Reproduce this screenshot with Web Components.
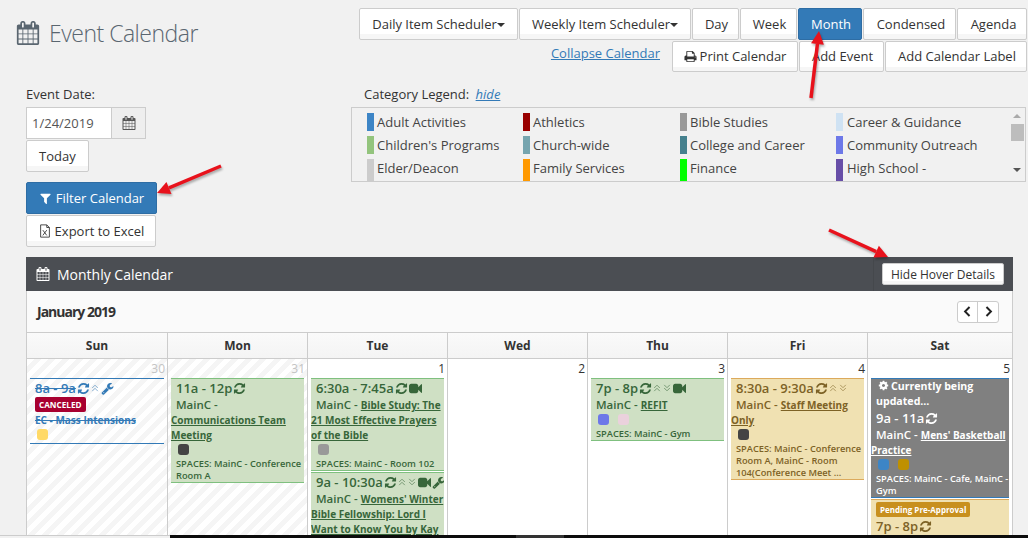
<!DOCTYPE html>
<html>
<head>
<meta charset="utf-8">
<title>Event Calendar</title>
<style>
  html, body { margin: 0; height: 538px; overflow: hidden; background: #f1f1f1; }
  body { font-family: "Open Sans", "Liberation Sans", sans-serif; font-size: 13px; color: #333; }
</style>
</head>
<body>

<ec-page>
  <ec-header>
    <ec-btn slot="row1" caret style="width:159px">Daily Item Scheduler</ec-btn>
    <ec-btn slot="row1" caret style="width:172px">Weekly Item Scheduler</ec-btn>
    <ec-btn slot="row1" style="width:47px;padding:0 0 0 2px">Day</ec-btn>
    <ec-btn slot="row1" style="width:57px;padding:0 0 0 2px">Week</ec-btn>
    <ec-btn slot="row1" primary style="width:64px;padding:0 0 0 2px">Month</ec-btn>
    <ec-btn slot="row1" style="width:93px;padding:0 0 0 3px">Condensed</ec-btn>
    <ec-btn slot="row1" style="width:70px;padding:0 0 0 3px">Agenda</ec-btn>
    <ec-btn slot="row2" style="width:126px;height:31px;padding:0 0 1px"><ec-icon name="print" size="13" style="margin-right:3px"></ec-icon>Print Calendar</ec-btn>
    <ec-btn slot="row2" style="width:85px;height:31px;padding:0 0 1px 2px">Add Event</ec-btn>
    <ec-btn slot="row2" style="width:142px;height:31px;padding:0 0 1px 2px">Add Calendar Label</ec-btn>
  </ec-header>

  <ec-controls>
    <ec-filters></ec-filters>
    <ec-legend>
      <ec-legend-item color="#3d85c6">Adult Activities</ec-legend-item>
      <ec-legend-item color="#990000">Athletics</ec-legend-item>
      <ec-legend-item color="#999999">Bible Studies</ec-legend-item>
      <ec-legend-item color="#cfe2f3">Career &amp; Guidance</ec-legend-item>
      <ec-legend-item color="#93c47d">Children's Programs</ec-legend-item>
      <ec-legend-item color="#76a5af">Church-wide</ec-legend-item>
      <ec-legend-item color="#45818e">College and Career</ec-legend-item>
      <ec-legend-item color="#6d78e8">Community Outreach</ec-legend-item>
      <ec-legend-item color="#cccccc">Elder/Deacon</ec-legend-item>
      <ec-legend-item color="#ff9900">Family Services</ec-legend-item>
      <ec-legend-item color="#00ff00">Finance</ec-legend-item>
      <ec-legend-item color="#674ea7">High School -</ec-legend-item>
    </ec-legend>
  </ec-controls>

  <ec-calendar>
    <cal-day num="30" muted>
      <cal-event kind="canceled" time="8a - 9a" icons="refresh,up,wrench" loc="" swatches="#ffd966">
        <cal-badge slot="before" color="#a80030">CANCELED</cal-badge>
        EC - Mass Intensions
      </cal-event>
    </cal-day>
    <cal-day num="31" muted>
      <cal-event kind="green" time="11a - 12p" icons="refresh" swatches="#444444" spaces="SPACES: MainC - Conference Room A">Communications Team Meeting</cal-event>
    </cal-day>
    <cal-day num="1">
      <cal-event kind="green" time="6:30a - 7:45a" icons="refresh,video" swatches="#999999" spaces="SPACES: MainC - Room 102">Bible Study: The 21 Most Effective Prayers of the Bible</cal-event>
      <cal-event kind="green" time="9a - 10:30a" icons="refresh,up,down,video,wrench">Womens' Winter Bible Fellowship: Lord I Want to Know You by Kay</cal-event>
    </cal-day>
    <cal-day num="2"></cal-day>
    <cal-day num="3">
      <cal-event kind="green" time="7p - 8p" icons="refresh,up,down,video" swatches="#6d78e8,#ead1dc" spaces="SPACES: MainC - Gym">REFIT</cal-event>
    </cal-day>
    <cal-day num="4">
      <cal-event kind="tan" time="8:30a - 9:30a" icons="refresh,up,down" swatches="#444444" spaces="SPACES: MainC - Conference Room A, MainC - Room 104(Conference Meet ...">Staff Meeting Only</cal-event>
    </cal-day>
    <cal-day num="5">
      <cal-event kind="gray" time="9a - 11a" icons="refresh" swatches="#3d85c6,#bf9000" spaces="SPACES: MainC - Cafe, MainC - Gym">
        <cal-note slot="before">Currently being updated...</cal-note>
        Mens' Basketball Practice
      </cal-event>
      <cal-event kind="tan" time="7p - 8p" icons="refresh" loc="">
        <cal-badge slot="before" color="#c8901f" small>Pending Pre-Approval</cal-badge>
      </cal-event>
    </cal-day>
  </ec-calendar>

  <red-arrow x1="221" y1="166" x2="157" y2="193"></red-arrow>
  <red-arrow x1="811" y1="98" x2="819" y2="31"></red-arrow>
  <red-arrow x1="829" y1="230" x2="888" y2="257"></red-arrow>
  <ec-taskbar></ec-taskbar>
</ec-page>

<script>
  // font awesome 4 outlines, viewBox 1792
  const ICONS = {
    calendar: 'M192 1664h288v-288h-288v288zm352 0h320v-288h-320v288zm-352-352h288v-320h-288v320zm352 0h320v-320h-320v320zm-352-384h288v-288h-288v288zm736 736h320v-288h-320v288zm-384-736h320v-288h-320v288zm768 736h288v-288h-288v288zm-384-352h320v-320h-320v320zm-352-864v-288q0-13-9.5-22.5t-22.5-9.5h-64q-13 0-22.5 9.5t-9.5 22.5v288q0 13 9.5 22.5t22.5 9.5h64q13 0 22.5-9.5t9.5-22.5zm736 864h288v-320h-288v320zm-384-384h320v-288h-320v288zm384 0h288v-288h-288v288zm32-480v-288q0-13-9.5-22.5t-22.5-9.5h-64q-13 0-22.5 9.5t-9.5 22.5v288q0 13 9.5 22.5t22.5 9.5h64q13 0 22.5-9.5t9.5-22.5zm384-64v1280q0 52-38 90t-90 38h-1408q-52 0-90-38t-38-90v-1280q0-52 38-90t90-38h128v-96q0-66 47-113t113-47h64q66 0 113 47t47 113v96h384v-96q0-66 47-113t113-47h64q66 0 113 47t47 113v96h128q52 0 90 38t38 90z',
    refresh: 'M1639 1056q0 5-1 7-64 268-268 434.5t-478 166.5q-146 0-282.5-55t-243.5-157l-129 129q-19 19-45 19t-45-19-19-45v-448q0-26 19-45t45-19h448q26 0 45 19t19 45-19 45l-137 137q71 66 161 102t187 36q134 0 250-65t186-179q11-17 53-117 8-23 30-23h192q13 0 22.5 9.5t9.5 22.5zm25-800v448q0 26-19 45t-45 19h-448q-26 0-45-19t-19-45 19-45l138-138q-148-137-349-137-134 0-250 65t-186 179q-11 17-53 117-8 23-30 23h-199q-13 0-22.5-9.5t-9.5-22.5v-7q65-268 270-434.5t480-166.5q146 0 284 55.5t245 156.5l130-129q19-19 45-19t45 19 19 45z',
    wrench: 'M448 1472q0-26-19-45t-45-19-45 19-19 45 19 45 45 19 45-19 19-45zm644-420l-682 682q-37 37-90 37-52 0-91-37l-106-108q-38-36-38-90 0-53 38-91l681-681q39 98 114.5 173.5t173.5 114.5zm634-435q0 39-23 106-47 134-164.5 217.5t-258.5 83.5q-185 0-316.5-131.5t-131.5-316.5 131.5-316.5 316.5-131.5q58 0 121.5 16.5t107.5 46.5q16 11 16 28t-16 28l-293 169v224l193 107q5-3 79-48.5t135.5-81 70.5-35.5q15 0 23.5 10t8.5 25z',
    video: 'M1792 352v1088q0 42-39 59-13 5-25 5-27 0-45-19l-403-403v166q0 119-84.5 203.5t-203.5 84.5h-704q-119 0-203.5-84.5t-84.5-203.5v-704q0-119 84.5-203.5t203.5-84.5h704q119 0 203.5 84.5t84.5 203.5v165l403-402q18-19 45-19 12 0 25 5 39 17 39 59z',
    filter: 'M1595 295q17 41-14 70l-493 493v742q0 42-39 59-13 5-25 5-27 0-45-19l-256-256q-19-19-19-45v-486l-493-493q-31-29-14-70 17-39 59-39h1280q42 0 59 39z',
    print: 'M448 1536h896v-256h-896v256zm0-640h896v-384h-160q-40 0-68-28t-28-68v-160h-640v640zm1152 64q0-26-19-45t-45-19-45 19-19 45 19 45 45 19 45-19 19-45zm128 0v416q0 13-9.5 22.5t-22.5 9.5h-224v160q0 40-28 68t-68 28h-960q-40 0-68-28t-28-68v-160h-224q-13 0-22.5-9.5t-9.5-22.5v-416q0-79 56.5-135.5t135.5-56.5h64v-544q0-40 28-68t68-28h672q40 0 88 20t76 48l152 152q28 28 48 76t20 88v256h64q79 0 135.5 56.5t56.5 135.5z',
    cog: 'M1152 896q0-106-75-181t-181-75-181 75-75 181 75 181 181 75 181-75 75-181zm512-109v222q0 12-8 23t-20 13l-185 28q-19 54-39 91 35 50 107 138 10 12 10 25t-9 23q-27 37-99 108t-94 71q-12 0-26-9l-138-108q-44 23-91 38-16 136-29 186-7 28-36 28h-222q-14 0-24.5-8.5t-11.5-21.5l-28-184q-49-16-90-37l-141 107q-10 9-25 9-14 0-25-11-126-114-165-168-7-10-7-23 0-12 8-23 15-21 51-66.5t54-70.5q-27-50-41-99l-183-27q-13-2-21-12.5t-8-23.5v-222q0-12 8-23t19-13l186-28q14-46 39-92-40-57-107-138-10-12-10-24 0-10 9-23 26-36 98.5-107.5t94.5-71.5q13 0 26 10l138 107q44-23 91-38 16-136 29-186 7-28 36-28h222q14 0 24.5 8.5t11.5 21.5l28 184q49 16 90 37l142-107q9-9 24-9 13 0 25 10 129 119 165 170 7 8 7 22 0 12-8 23-15 21-51 66.5t-54 70.5q26 50 41 98l183 28q13 2 21 12.5t8 23.5z'
  };

  // line icons that are drawn rather than filled, viewBox 16
  const STROKES = {
    up: 'M3.5 8 8 3.5 12.5 8M3.5 13 8 8.5 12.5 13',
    down: 'M3.5 3 8 7.5 12.5 3M3.5 8 8 12.5 12.5 8',
    left: 'M10.5 2.5 5 8l5.5 5.5',
    right: 'M5.5 2.5 11 8l-5.5 5.5',
    excel: 'M3 1h7l3 3v11H3zM10 1v3h3M5.5 7l4.5 6M10 7l-4.5 6'
  };

  class EcIcon extends HTMLElement {
    connectedCallback() {
      const name = this.getAttribute('name');
      const size = this.getAttribute('size') || 14;
      const root = this.shadowRoot || this.attachShadow({ mode: 'open' });
      let shape;
      if (STROKES[name]) {
        const width = this.getAttribute('stroke') || 1.4;
        shape = `<svg viewBox="0 0 16 16" width="${size}" height="${size}"><path d="${STROKES[name]}" fill="none" stroke="currentColor" stroke-width="${width}"/></svg>`;
      } else {
        shape = `<svg viewBox="0 0 1792 1792" width="${size}" height="${size}"><path d="${ICONS[name]}" fill="currentColor"/></svg>`;
      }
      root.innerHTML = `<style>
        :host { display: inline-block; line-height: 0; vertical-align: -2px; }
      </style>${shape}`;
    }
  }
  customElements.define('ec-icon', EcIcon);

  class EcPage extends HTMLElement {
    constructor() {
      super();
      this.attachShadow({ mode: 'open' });
      this.shadowRoot.innerHTML = `<style>
        :host { display: block; position: relative; width: 1028px; height: 538px; overflow: hidden; }
      </style><slot></slot>`;
    }
  }
  customElements.define('ec-page', EcPage);

  class EcBtn extends HTMLElement {
    constructor() {
      super();
      this.attachShadow({ mode: 'open' });
      this.shadowRoot.innerHTML = `<style>
        :host { display: inline-flex; align-items: center; justify-content: center; box-sizing: border-box; height: 32px; padding: 0 12px; background: linear-gradient(#fff 85%, #f6f6f6 85%); border: 1px solid #ccc; border-radius: 2px; color: #333; font-size: 13px; white-space: nowrap; }
        :host([primary]) { background: #337ab7; border-color: #2e6da4; color: #fff; }
        :host([small]) { height: 22px; font-size: 12px; padding: 0 8px; }
        .caret { display: none; width: 0; height: 0; margin-top: 2px; border: 4px solid transparent; border-top-color: #333; border-bottom: 0; }
        :host([caret]) .caret { display: inline-block; }
      </style><slot></slot><span class="caret"></span>`;
    }
  }
  customElements.define('ec-btn', EcBtn);

  class EcHeader extends HTMLElement {
    constructor() {
      super();
      this.attachShadow({ mode: 'open' });
      this.shadowRoot.innerHTML = `<style>
        :host { display: flex; justify-content: space-between; padding: 8px 1px 0 16px; height: 85px; box-sizing: border-box; }
        .title { display: flex; align-items: center; gap: 9px; height: 50px; color: #5a6670; font-size: 23px; font-weight: 300; letter-spacing: -0.5px; }
        .tools { display: flex; flex-direction: column; gap: 1px; align-items: flex-end; }
        .row { display: flex; gap: 1px; align-items: flex-start; }
        a { color: #337ab7; text-decoration: underline; font-size: 13px; margin-right: 11px; margin-top: 3px; }
      </style>
      <div class="title"><ec-icon name="calendar" size="24"></ec-icon><span>Event Calendar</span></div>
      <div class="tools">
        <div class="row"><slot name="row1"></slot></div>
        <div class="row"><a>Collapse Calendar</a><slot name="row2"></slot></div>
      </div>`;
    }
  }
  customElements.define('ec-header', EcHeader);

  class EcControls extends HTMLElement {
    constructor() {
      super();
      this.attachShadow({ mode: 'open' });
      this.shadowRoot.innerHTML = `<style>
        :host { display: flex; justify-content: space-between; height: 172px; padding: 0 2px 0 26px; box-sizing: border-box; }
      </style><slot></slot>`;
    }
  }
  customElements.define('ec-controls', EcControls);

  class EcFilters extends HTMLElement {
    constructor() {
      super();
      this.attachShadow({ mode: 'open' });
      this.shadowRoot.innerHTML = `<style>
        :host { display: flex; flex-direction: column; align-items: flex-start; font-size: 13px; }
        label { display: block; height: 22px; line-height: 18px; }
        .group { display: flex; height: 32px; }
        .input { box-sizing: border-box; width: 85px; height: 32px; padding-left: 5px; line-height: 30px; background: #fff; border: 1px solid #ccc; border-right: 0; color: #555; }
        .addon { box-sizing: border-box; width: 35px; height: 32px; display: flex; align-items: center; justify-content: center; background: #eee; border: 1px solid #ccc; color: #555; }
        ec-btn { margin-top: 1px; }
        .filter { margin-top: 10px; width: 131px; }
        .export { width: 130px; }
      </style>
      <label>Event Date:</label>
      <div class="group"><div class="input">1/24/2019</div><div class="addon"><ec-icon name="calendar" size="14"></ec-icon></div></div>
      <ec-btn>Today</ec-btn>
      <ec-btn class="filter" primary><ec-icon name="filter" size="13" style="margin-right:4px"></ec-icon>Filter Calendar</ec-btn>
      <ec-btn class="export"><ec-icon name="excel" size="14" stroke="1" style="margin-right:3px"></ec-icon>Export to Excel</ec-btn>`;
    }
  }
  customElements.define('ec-filters', EcFilters);

  class EcLegend extends HTMLElement {
    constructor() {
      super();
      this.attachShadow({ mode: 'open' });
      this.shadowRoot.innerHTML = `<style>
        :host { display: block; width: 675px; font-size: 13px; }
        .label { height: 22px; padding-left: 13px; box-sizing: border-box; line-height: 18px; }
        .label a { color: #337ab7; font-style: italic; text-decoration: underline; margin-left: 3px; }
        .box { display: flex; box-sizing: border-box; height: 75px; border: 1px solid #ccc; overflow: hidden; }
        .grid { flex: 1; display: grid; grid-template-columns: 156px 157px 156px 1fr; grid-auto-rows: 18px; row-gap: 5px; padding: 5px 0 0 15px; }
        .bar { width: 16px; display: flex; flex-direction: column; align-items: center; color: #666; }
        .up, .down { width: 0; height: 0; border: 4px solid transparent; }
        .up { border-bottom-color: #aaa; border-top: 0; margin-top: 6px; }
        .thumb { width: 13px; height: 17px; background: #bdbdbd; margin-top: 6px; }
        .down { border-top-color: #555; border-bottom: 0; margin-top: 27px; }
      </style>
      <div class="label">Category Legend: <a>hide</a></div>
      <div class="box"><div class="grid"><slot></slot></div><div class="bar"><span class="up"></span><span class="thumb"></span><span class="down"></span></div></div>`;
    }
  }
  customElements.define('ec-legend', EcLegend);

  class EcLegendItem extends HTMLElement {
    constructor() {
      super();
      this.attachShadow({ mode: 'open' });
      this.shadowRoot.innerHTML = `<style>
        :host { display: flex; align-items: stretch; gap: 3px; font-size: 13px; line-height: 18px; color: #444; white-space: nowrap; }
        :host(:nth-child(4n)) { gap: 4px; }
        i { width: 7px; height: 18px; display: block; }
        :host(:nth-child(n+9)) i { height: 23px; }
      </style><i></i><slot></slot>`;
    }
    connectedCallback() {
      this.shadowRoot.querySelector('i').style.background = this.getAttribute('color');
    }
  }
  customElements.define('ec-legend-item', EcLegendItem);

  class EcCalendar extends HTMLElement {
    constructor() {
      super();
      this.attachShadow({ mode: 'open' });
      const names = ['Sun', 'Mon', 'Tue', 'Wed', 'Thu', 'Fri', 'Sat'];
      this.shadowRoot.innerHTML = `<style>
        :host { display: block; margin-left: 26px; width: 987px; font-size: 13px; border-right: 1px solid #ccc; border-left: 1px solid #ccc; box-sizing: border-box; }
        .head { display: flex; align-items: center; justify-content: space-between; height: 34px; margin: 0 -1px; background: #4b4e53; color: #fff; padding: 0 9px 0 10px; font-size: 14px; }
        .head .name { display: flex; align-items: center; gap: 7px; }
        .head .side { display: flex; align-items: center; height: 100%; padding-left: 8px; border-left: 1px solid #45484c; }
        .head ec-icon { color: #fff; }
        .month { display: flex; align-items: center; justify-content: space-between; height: 41px; padding: 0 13px 0 10px; background: #fafafa; }
        .month b { color: #333; font-size: 14px; font-weight: 700; letter-spacing: -1px; }
        .nav { display: flex; box-sizing: border-box; height: 22px; background: #fff; border: 1px solid #ccc; border-radius: 3px; }
        .nav span { width: 19px; display: flex; align-items: center; justify-content: center; color: #222; }
        .nav span + span { border-left: 1px solid #ccc; width: 20px; }
        .grid { display: grid; grid-template-columns: 141px 140px 140px 140px 140px 140px 144px; }
        .dow { box-sizing: border-box; height: 27px; display: flex; align-items: center; justify-content: center; border-top: 1px solid #ccc; border-bottom: 1px solid #ccc; border-right: 1px solid #ccc; background: linear-gradient(#fafafa, #f4f4f4); font-size: 12px; font-weight: 700; color: #333; }
        .dow:nth-child(7) { border-right: 0; }
      </style>
      <div class="head">
        <div class="name"><ec-icon name="calendar" size="14"></ec-icon><span>Monthly Calendar</span></div>
        <div class="side"><ec-btn small>Hide Hover Details</ec-btn></div>
      </div>
      <div class="month"><b>January 2019</b><div class="nav"><span><ec-icon name="left" size="13" stroke="2.4"></ec-icon></span><span><ec-icon name="right" size="13" stroke="2.4"></ec-icon></span></div></div>
      <div class="grid">${names.map(n => `<div class="dow">${n}</div>`).join('')}<slot></slot></div>`;
    }
  }
  customElements.define('ec-calendar', EcCalendar);

  class CalDay extends HTMLElement {
    constructor() {
      super();
      this.attachShadow({ mode: 'open' });
      this.shadowRoot.innerHTML = `<style>
        :host { display: block; box-sizing: border-box; height: 200px; padding: 0 3px; background: #fff; border-right: 1px solid #ccc; }
        :host(:last-child) { border-right: 0; }
        :host([muted]) { background: repeating-linear-gradient(135deg, #fff 0 5px, #f5f5f5 5px 10px); }
        .num { height: 19px; line-height: 19px; text-align: right; font-size: 12px; color: #333; margin-right: -1px; }
        :host([muted]) .num { color: #c4c4c4; }
      </style><div class="num"></div><slot></slot>`;
    }
    connectedCallback() {
      this.shadowRoot.querySelector('.num').textContent = this.getAttribute('num');
    }
  }
  customElements.define('cal-day', CalDay);

  class CalBadge extends HTMLElement {
    constructor() {
      super();
      this.attachShadow({ mode: 'open' });
      this.shadowRoot.innerHTML = `<style>
        :host { display: block; width: fit-content; box-sizing: border-box; height: 15px; line-height: 15px; margin: 0 0 0 5px; padding: 0 4px; border-radius: 2px; color: #fff; font-size: 8.2px; font-weight: 700; white-space: nowrap; }
        :host([small]) { font-size: 8px; margin-top: 2px; }
      </style><slot></slot>`;
    }
    connectedCallback() {
      this.style.background = this.getAttribute('color');
    }
  }
  customElements.define('cal-badge', CalBadge);

  class CalNote extends HTMLElement {
    constructor() {
      super();
      this.attachShadow({ mode: 'open' });
      this.shadowRoot.innerHTML = `<style>
        :host { display: block; padding: 0 0 0 5px; color: #fff; font-size: 10.6px; font-weight: 700; line-height: 15px; }
        ec-icon { margin-left: 2px; margin-right: 2px; vertical-align: -1px; }
      </style><ec-icon name="cog" size="11"></ec-icon><slot></slot>`;
    }
  }
  customElements.define('cal-note', CalNote);

  class CalEvent extends HTMLElement {
    constructor() {
      super();
      this.attachShadow({ mode: 'open' });
    }
    connectedCallback() {
      const icons = (this.getAttribute('icons') || '').split(',').filter(Boolean);
      const swatches = (this.getAttribute('swatches') || '').split(',').filter(Boolean);
      const spaces = this.getAttribute('spaces');
      const loc = this.hasAttribute('loc') ? this.getAttribute('loc') : 'MainC -';
      const iconHtml = icons.map(n => {
        const thin = n === 'up' || n === 'down';
        return `<ec-icon class="${thin ? 'thin' : ''}" name="${n}" size="${thin ? 10 : 13}"></ec-icon>`;
      }).join('');
      this.shadowRoot.innerHTML = `<style>
        :host { display: block; box-sizing: border-box; margin-bottom: 1px; border-top: 1px solid; border-bottom: 1px solid; font-size: 10px; font-weight: 700; overflow: hidden; }
        :host([kind=green]) { background: #cfe0c4; border-color: #7fc07f; color: #37663a; }
        :host([kind=tan]) { background: #f0e1b2; border-color: #dcaa5c; color: #7d6226; }
        :host([kind=gray]) { background: #808080; border-color: #337ab7; color: #fff; }
        :host([kind=canceled]) { background: transparent; border-color: #337ab7; color: #337ab7; padding-bottom: 1px; }
        .time { display: flex; align-items: center; height: 18px; padding-left: 5px; font-size: 13px; font-weight: 600; white-space: nowrap; }
        .time ec-icon { flex: none; margin-left: 1px; vertical-align: 0; }
        .time .thin { opacity: .65; margin: 0; }
        .text { line-height: 15px; text-indent: 5px; }
        .loc { font-size: 11.5px; font-weight: 600; line-height: 15px; }
        .link { text-decoration: underline; }
        .swatches { display: flex; gap: 9px; height: 14px; padding: 1px 0 0 7px; box-sizing: border-box; }
        .swatches i { display: block; width: 11px; height: 11px; border-radius: 3px; }
        .spaces { padding-left: 5px; font-size: 9.25px; font-weight: 600; line-height: 12px; margin-top: 1px; }
        :host([kind=canceled]) .time span, :host([kind=canceled]) .text { text-decoration: line-through; }
        :host([kind=canceled]) .text { margin-top: 1px; }
      </style>
      <slot name="before"></slot>
      <div class="time"><span>${this.getAttribute('time')}</span>${iconHtml}</div>
      <div class="text">${loc ? `<span class="loc">${loc} </span><span class="link"><slot></slot></span>` : '<slot></slot>'}</div>
      ${swatches.length ? `<div class="swatches">${swatches.map(c => `<i style="background:${c}"></i>`).join('')}</div>` : ''}
      ${spaces ? `<div class="spaces">${spaces}</div>` : ''}`;
      // the badge sits under the time on a canceled event
      if (this.getAttribute('kind') === 'canceled') {
        const time = this.shadowRoot.querySelector('.time');
        const slot = this.shadowRoot.querySelector('slot[name=before]');
        time.after(slot);
      }
    }
  }
  customElements.define('cal-event', CalEvent);

  class RedArrow extends HTMLElement {
    connectedCallback() {
      const [x1, y1, x2, y2] = ['x1', 'y1', 'x2', 'y2'].map(a => +this.getAttribute(a));
      const len = Math.hypot(x2 - x1, y2 - y1);
      const ux = (x2 - x1) / len, uy = (y2 - y1) / len;
      const bx = x2 - ux * 13, by = y2 - uy * 13;
      const head = `${x2},${y2} ${bx - uy * 6.5},${by + ux * 6.5} ${bx + uy * 6.5},${by - ux * 6.5}`;
      this.attachShadow({ mode: 'open' }).innerHTML = `<style>
        :host { position: absolute; inset: 0; pointer-events: none; display: block; }
        svg { position: absolute; left: 0; top: 0; filter: drop-shadow(1px 2px 1px rgba(0,0,0,.3)); }
      </style><svg width="1028" height="538"><line x1="${x1}" y1="${y1}" x2="${bx}" y2="${by}" stroke="#e8121c" stroke-width="3.5"/><polygon points="${head}" fill="#e8121c"/></svg>`;
    }
  }
  customElements.define('red-arrow', RedArrow);

  class EcTaskbar extends HTMLElement {
    constructor() {
      super();
      this.attachShadow({ mode: 'open' });
      this.shadowRoot.innerHTML = `<style>
        :host { position: absolute; left: 0; right: 0; bottom: 0; height: 3px; display: flex; }
        .a { width: 170px; background: #f1f1f1; box-shadow: inset 0 1px 0 #ccc; }
        .b { width: 346px; background: #0c0c0c; }
        .c { width: 48px; background: #333; }
        .d { flex: 1; background: #0c0c0c; }
      </style><div class="a"></div><div class="b"></div><div class="c"></div><div class="d"></div>`;
    }
  }
  customElements.define('ec-taskbar', EcTaskbar);
</script>
</body>
</html>
